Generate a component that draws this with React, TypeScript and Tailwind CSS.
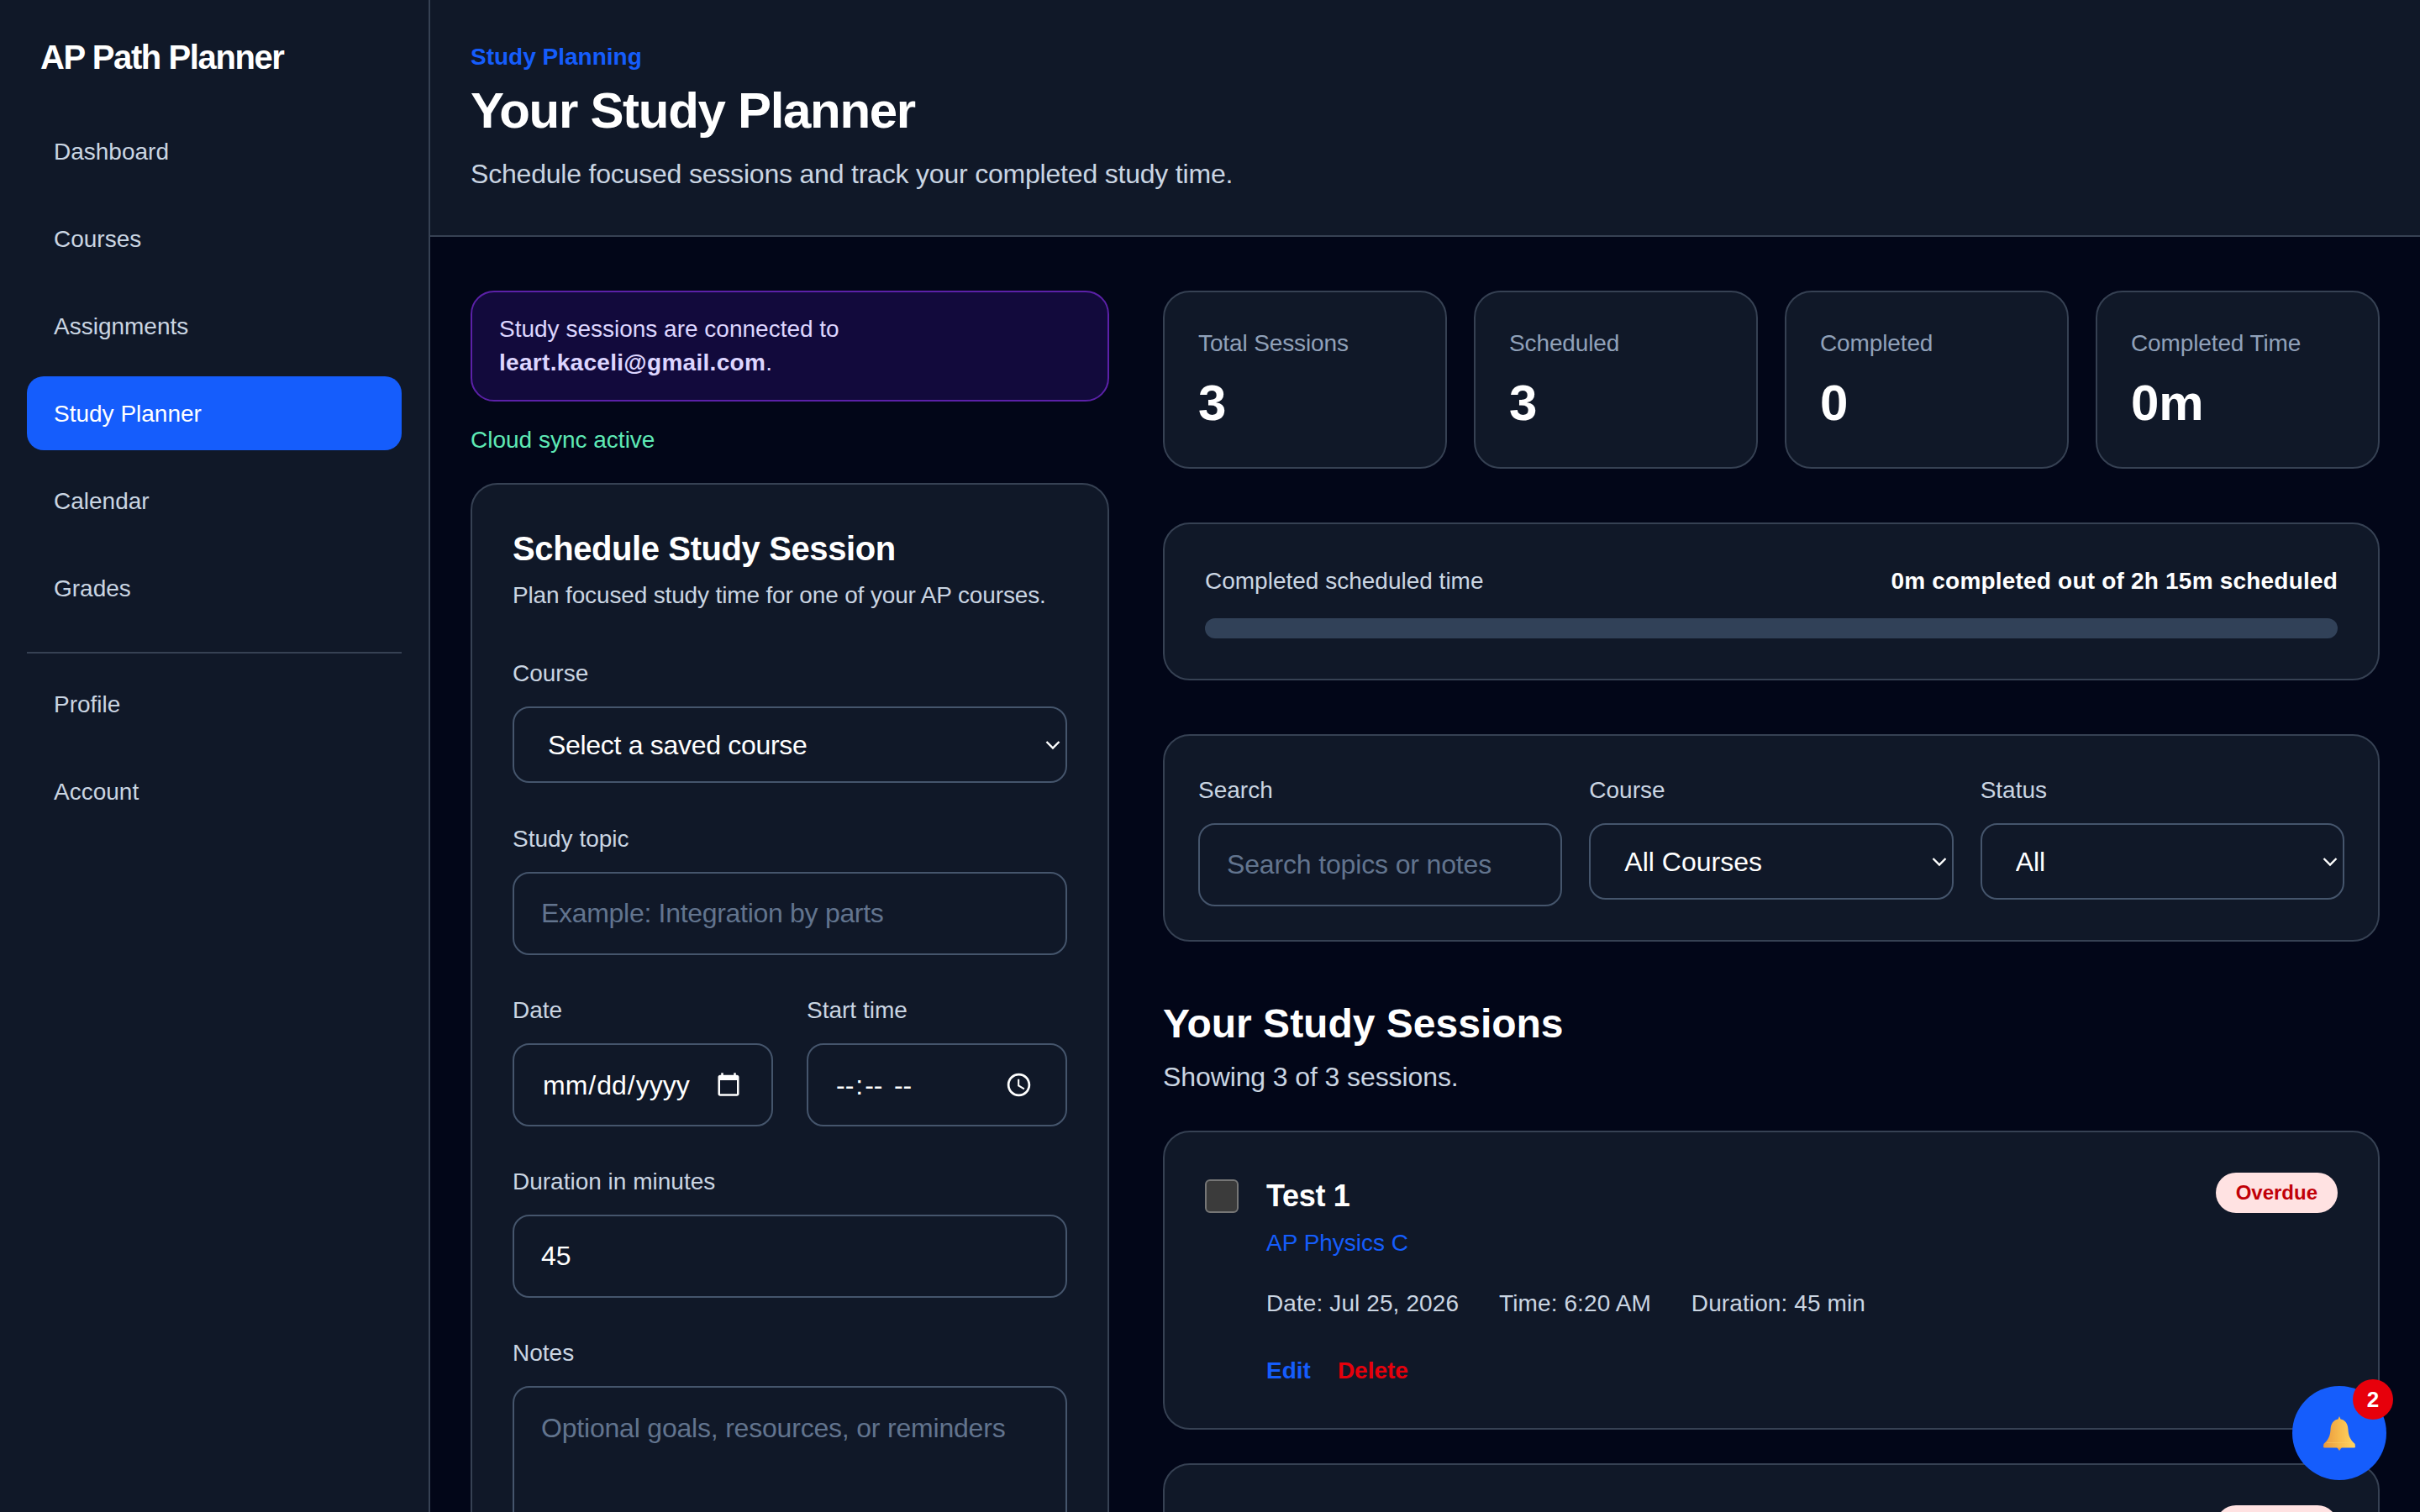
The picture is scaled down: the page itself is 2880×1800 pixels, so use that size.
import React from "react";

const navTop = ["Dashboard", "Courses", "Assignments", "Study Planner", "Calendar", "Grades"];
const navBottom = ["Profile", "Account"];

function NavItem({ label }: { label: string }) {
  const active = label === "Study Planner";
  return (
    <a
      className={
        active
          ? "flex h-[88px] items-center rounded-[20px] bg-blue-600 px-8 pt-px text-[28px] text-white"
          : "flex h-[88px] items-center rounded-[20px] px-8 pt-px text-[28px] text-slate-300"
      }
    >
      {label}
    </a>
  );
}

function Label({ children }: { children: React.ReactNode }) {
  return <label className="mb-[14px] block text-[28px] leading-[50px] text-slate-300">{children}</label>;
}

function Chevron() {
  return (
    <svg
      className="pointer-events-none absolute right-[8px] top-1/2 -translate-y-1/2"
      width="18"
      height="12"
      viewBox="0 0 18 12"
      fill="none"
      stroke="#ffffff"
      strokeWidth="2.4"
    >
      <path d="M1.5 2 L9 9.5 L16.5 2" />
    </svg>
  );
}

function SelectBox({ value, tight }: { value: string; tight?: boolean }) {
  return (
    <div className="relative">
      <select
        className={
          tight
            ? "h-[91px] w-full appearance-none rounded-[20px] border-2 border-slate-600 bg-gray-900 pl-[40px] pr-8 text-[32px] tracking-[-0.3px] text-white outline-none"
            : "h-[91px] w-full appearance-none rounded-[20px] border-2 border-slate-600 bg-gray-900 pl-[40px] pr-8 text-[32px] text-white outline-none"
        }
      >
        <option>{value}</option>
      </select>
      <Chevron />
    </div>
  );
}

const inputCls =
  "h-[99px] w-full rounded-[20px] border-2 border-slate-600 bg-gray-900 px-8 text-[32px] text-white outline-none placeholder:text-slate-500 [color-scheme:dark]";

function Stat({ label, value }: { label: string; value: string }) {
  return (
    <div className="rounded-[32px] border-2 border-gray-700 bg-gray-900 px-10 pb-10 pt-[39px]">
      <div className="text-[28px] leading-[44px] tracking-[-0.12px] text-slate-400">{label}</div>
      <div className="mt-[13px] text-[60px] font-bold leading-[72px] text-white">{value}</div>
    </div>
  );
}

function Badge() {
  return (
    <span className="flex h-12 items-center rounded-full bg-red-100 px-6 text-[24px] font-bold text-red-700">
      Overdue
    </span>
  );
}

function BellGlyph() {
  return (
    <svg width="38" height="41" viewBox="0 0 38 41">
      <defs>
        <linearGradient id="bellFill" x1="0" y1="0" x2="1" y2="0">
          <stop offset="0" stopColor="#ea983c" />
          <stop offset="0.55" stopColor="#f8bd4e" />
          <stop offset="1" stopColor="#ffd661" />
        </linearGradient>
      </defs>
      <path d="M16 37 h6 l-3 4 z" fill="#ef9f3f" />
      <path
        d="M19 0 l1.5 3.6 C26 4.6 29 9 29.4 15 C29.8 22 31 27 37.6 33 L38 36.6 Q38 37.6 36.6 37.6 L1.4 37.6 Q0 37.6 0 36.6 L0.4 33 C7 27 8.2 22 8.6 15 C9 9 12 4.6 17.5 3.6 Z"
        fill="url(#bellFill)"
      />
      <path d="M4 31.5 H34" stroke="#fbd06a" strokeWidth="1" opacity="0.5" />
    </svg>
  );
}

export default function App() {
  return (
    <div className="relative flex h-screen overflow-hidden bg-slate-950 font-['Liberation_Sans',Arial,sans-serif]">
      <aside className="w-[512px] shrink-0 border-r-2 border-gray-700 bg-gray-900 px-8 pt-8">
        <div className="mb-8 h-[72px] px-4 text-[40px] font-bold leading-[72px] tracking-[-1.4px] text-white">
          AP Path Planner
        </div>
        <nav className="flex flex-col gap-4">
          {navTop.map((n) => (
            <NavItem key={n} label={n} />
          ))}
          <div className="mt-4 flex flex-col gap-4 border-t-2 border-gray-700 pt-4">
            {navBottom.map((n) => (
              <NavItem key={n} label={n} />
            ))}
          </div>
        </nav>
      </aside>

      <div className="flex min-w-0 flex-1 flex-col">
        <header className="shrink-0 border-b-2 border-gray-700 bg-gray-900 pb-[49px] pl-12 pt-[46px]">
          <div className="text-[28px] font-bold leading-[44px] text-blue-600">Study Planning</div>
          <h1 className="mt-[6px] text-[60px] font-bold leading-[72px] tracking-[-1.3px] text-white">
            Your Study Planner
          </h1>
          <p className="mt-[15px] text-[32px] leading-[48px] tracking-[-0.2px] text-slate-300">
            Schedule focused sessions and track your completed study time.
          </p>
        </header>

        <main className="grid grid-cols-[760px_1448px] gap-16 px-12 pt-16">
          <section className="flex flex-col">
            <div className="rounded-[28px] border-2 border-[#5b21a8] bg-[#120a3c] px-8 pb-[24px] pt-[24px] text-[28px] leading-[40px] text-violet-200">
              Study sessions are connected to
              <br />
              <strong className="tracking-[0.3px]">leart.kaceli@gmail.com</strong>.
            </div>
            <p className="mt-[24px] text-[28px] leading-[44px] text-emerald-300">Cloud sync active</p>

            <form className="mt-[29px] rounded-[32px] border-2 border-gray-700 bg-gray-900 px-12 pb-12 pt-12">
              <h2 className="text-[40px] font-bold leading-[56px] tracking-[-0.4px] text-white">
                Schedule Study Session
              </h2>
              <p className="mt-[6px] text-[28px] leading-[44px] tracking-[-0.15px] text-slate-300">
                Plan focused study time for one of your AP courses.
              </p>

              <div className="mt-[46px]">
                <Label>Course</Label>
                <SelectBox value="Select a saved course" tight />
              </div>

              <div className="mt-[42px]">
                <Label>Study topic</Label>
                <input className={`${inputCls} tracking-[-0.3px]`} placeholder="Example: Integration by parts" />
              </div>

              <div className="mt-[41px] grid grid-cols-2 gap-10">
                <div>
                  <Label>Date</Label>
                  <input
                    type="date"
                    className="h-[99px] w-full rounded-[20px] border-2 border-slate-600 bg-gray-900 px-[33px] text-[32px] text-white outline-none [color-scheme:dark]"
                  />
                </div>
                <div>
                  <Label>Start time</Label>
                  <input
                    type="time"
                    className="h-[99px] w-full rounded-[20px] border-2 border-slate-600 bg-gray-900 pl-8 pr-[35px] text-[32px] text-white outline-none [color-scheme:dark] [&::-webkit-datetime-edit-ampm-field]:pl-[6px] [&::-webkit-datetime-edit-hour-field]:pr-[2px] [&::-webkit-datetime-edit-minute-field]:pl-[2px]"
                  />
                </div>
              </div>

              <div className="mt-[41px]">
                <Label>Duration in minutes</Label>
                <input className={inputCls} defaultValue="45" />
              </div>

              <div className="mt-[41px]">
                <Label>Notes</Label>
                <textarea
                  className="h-[240px] w-full resize-none rounded-[20px] border-2 border-slate-600 bg-gray-900 px-8 py-6 text-[32px] tracking-[-0.2px] text-white outline-none placeholder:text-slate-500"
                  placeholder="Optional goals, resources, or reminders"
                />
              </div>
            </form>
          </section>

          <section className="flex flex-col">
            <div className="grid grid-cols-4 gap-8">
              <Stat label="Total Sessions" value="3" />
              <Stat label="Scheduled" value="3" />
              <Stat label="Completed" value="0" />
              <Stat label="Completed Time" value="0m" />
            </div>

            <div className="mt-16 rounded-[32px] border-2 border-gray-700 bg-gray-900 p-12">
              <div className="flex items-center justify-between text-[28px] leading-[40px]">
                <span className="text-slate-300">Completed scheduled time</span>
                <strong className="tracking-[0.2px] text-white">0m completed out of 2h 15m scheduled</strong>
              </div>
              <div className="mt-6 h-6 rounded-full bg-slate-700" />
            </div>

            <div className="mt-16 grid grid-cols-3 items-start gap-8 rounded-[32px] border-2 border-gray-700 bg-gray-900 p-10">
              <div>
                <Label>Search</Label>
                <input className={`${inputCls} tracking-[-0.15px]`} placeholder="Search topics or notes" />
              </div>
              <div>
                <Label>Course</Label>
                <SelectBox value="All Courses" />
              </div>
              <div>
                <Label>Status</Label>
                <SelectBox value="All" />
              </div>
            </div>

            <h2 className="mt-[66px] text-[48px] font-bold leading-[64px] text-white">Your Study Sessions</h2>
            <p className="mt-[7px] text-[32px] leading-[48px] tracking-[-0.1px] text-slate-300">
              Showing 3 of 3 sessions.
            </p>

            <article className="mt-10 flex items-start rounded-[32px] border-2 border-gray-700 bg-gray-900 px-12 pb-[46px] pt-12">
              <input
                type="checkbox"
                className="mr-[33px] mt-2 h-10 w-10 shrink-0 appearance-none rounded-[6px] border-2 border-[#767676] bg-[#3b3b3b]"
              />
              <div className="min-w-0 flex-1">
                <h3 className="pt-px text-[36px] font-bold leading-[53px] tracking-[-0.3px] text-white">Test 1</h3>
                <p className="mt-2 text-[28px] leading-[44px] text-blue-600">AP Physics C</p>
                <div className="mt-7 flex gap-12 text-[28px] leading-[44px] tracking-[0.1px] text-slate-300">
                  <span>Date: Jul 25, 2026</span>
                  <span>Time: 6:20 AM</span>
                  <span>Duration: 45 min</span>
                </div>
                <div className="mt-9 flex gap-8 text-[28px] font-bold leading-[44px]">
                  <button type="button" className="text-blue-600">Edit</button>
                  <button type="button" className="text-red-600">Delete</button>
                </div>
              </div>
              <Badge />
            </article>

            <article className="mt-10 flex h-[356px] justify-end rounded-[32px] border-2 border-gray-700 bg-gray-900 px-12 pt-12">
              <Badge />
            </article>
          </section>
        </main>
      </div>

      <button
        type="button"
        className="absolute bottom-[38px] right-10 flex h-28 w-28 items-center justify-center rounded-full bg-blue-600"
      >
        <BellGlyph />
        <span className="absolute -right-2 -top-2 flex h-12 w-12 items-center justify-center rounded-full bg-red-600 text-[26px] font-bold text-white">
          2
        </span>
      </button>
    </div>
  );
}
